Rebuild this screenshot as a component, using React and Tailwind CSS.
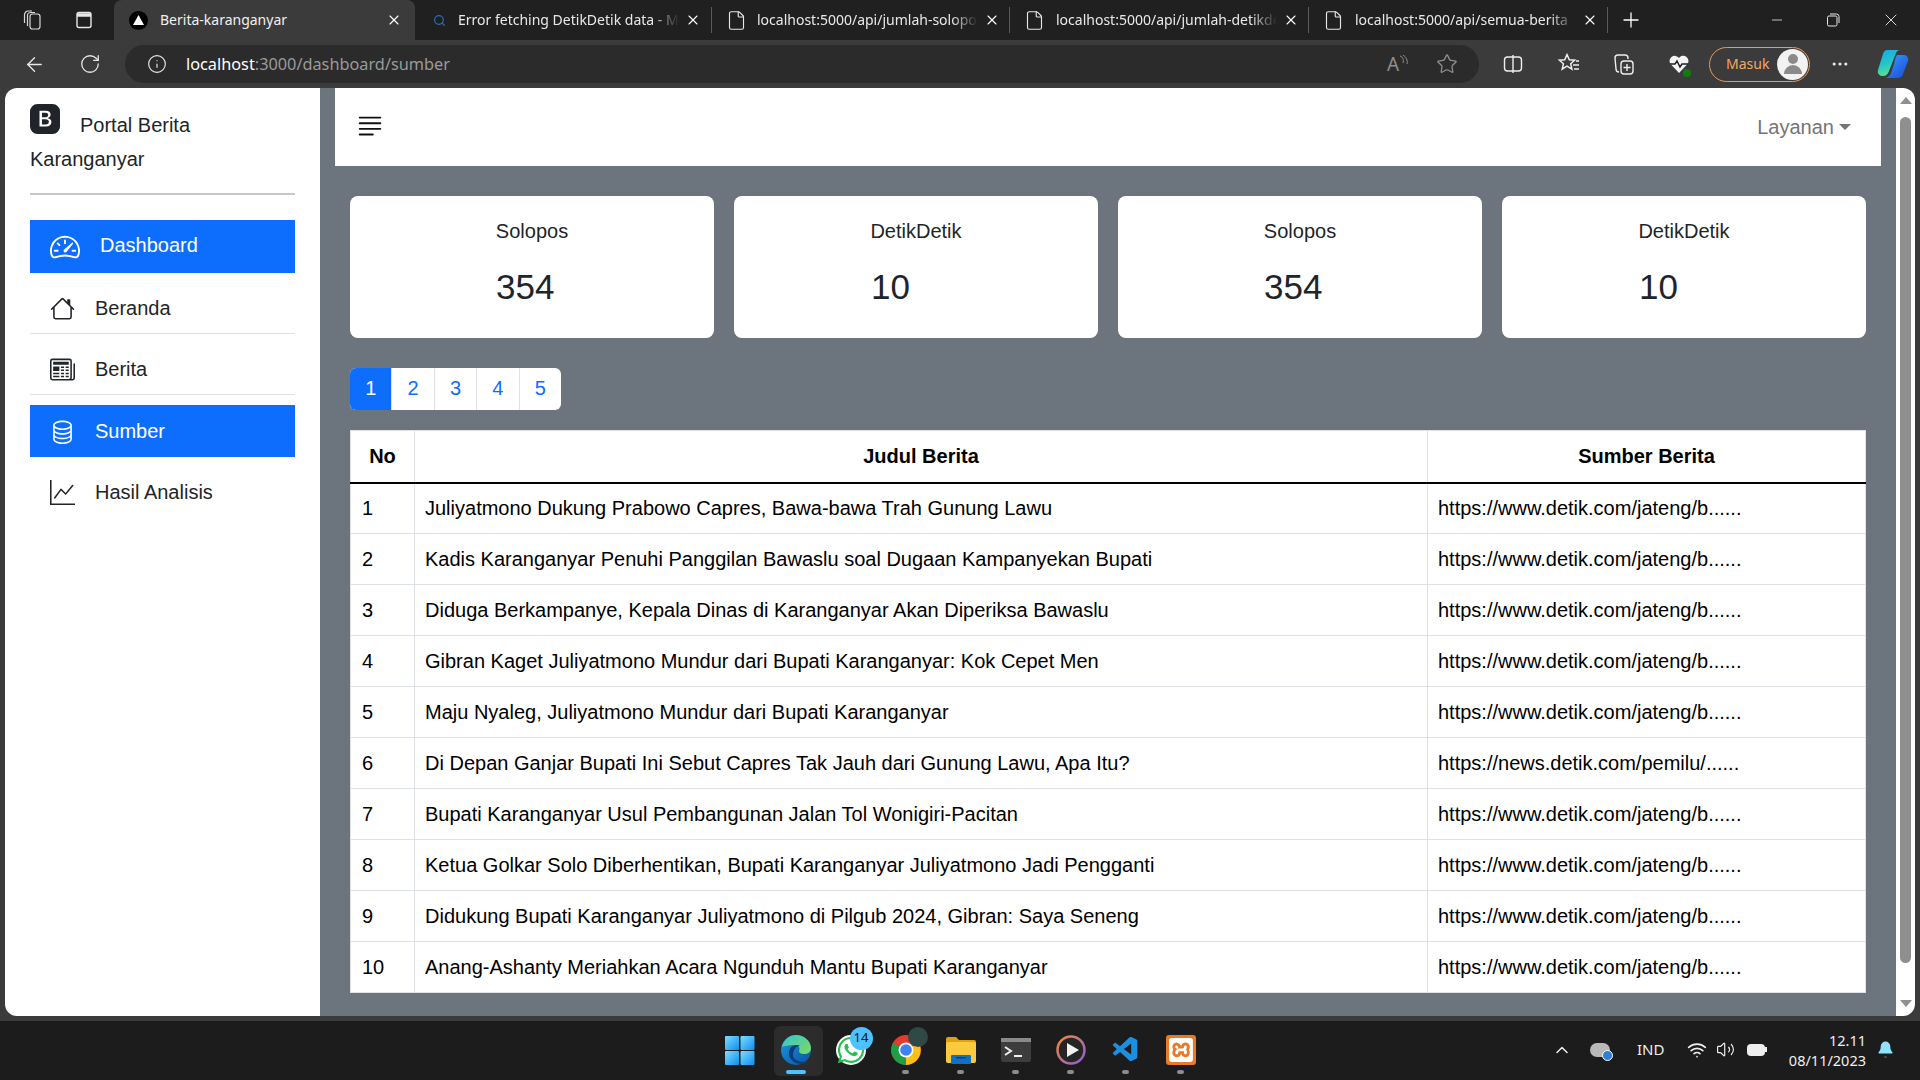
import React from "react";
import { BsSpeedometer2, BsHouse, BsNewspaper, BsDatabase, BsGraphUp, BsJustifyLeft, BsBootstrapFill } from "react-icons/bs";
import { VscVscode } from "react-icons/vsc";
import { SiXampp } from "react-icons/si";
import { FaWhatsapp } from "react-icons/fa";
import { ArrowLeft, RotateCw, Info, Star, ChevronUp, Volume2, Wifi, Bell, Plus, X, Minus, File, Search, MoreHorizontal } from "lucide-react";

const rows = [
  ["Juliyatmono Dukung Prabowo Capres, Bawa-bawa Trah Gunung Lawu", "https://www.detik.com/jateng/b......"],
  ["Kadis Karanganyar Penuhi Panggilan Bawaslu soal Dugaan Kampanyekan Bupati", "https://www.detik.com/jateng/b......"],
  ["Diduga Berkampanye, Kepala Dinas di Karanganyar Akan Diperiksa Bawaslu", "https://www.detik.com/jateng/b......"],
  ["Gibran Kaget Juliyatmono Mundur dari Bupati Karanganyar: Kok Cepet Men", "https://www.detik.com/jateng/b......"],
  ["Maju Nyaleg, Juliyatmono Mundur dari Bupati Karanganyar", "https://www.detik.com/jateng/b......"],
  ["Di Depan Ganjar Bupati Ini Sebut Capres Tak Jauh dari Gunung Lawu, Apa Itu?", "https://news.detik.com/pemilu/......"],
  ["Bupati Karanganyar Usul Pembangunan Jalan Tol Wonigiri-Pacitan", "https://www.detik.com/jateng/b......"],
  ["Ketua Golkar Solo Diberhentikan, Bupati Karanganyar Juliyatmono Jadi Pengganti", "https://www.detik.com/jateng/b......"],
  ["Didukung Bupati Karanganyar Juliyatmono di Pilgub 2024, Gibran: Saya Seneng", "https://www.detik.com/jateng/b......"],
  ["Anang-Ashanty Meriahkan Acara Ngunduh Mantu Bupati Karanganyar", "https://www.detik.com/jateng/b......"],
];

const cards = [
  ["Solopos", "354", "pl-[146px]"],
  ["DetikDetik", "10", "pl-[137px]"],
  ["Solopos", "354", "pl-[146px]"],
  ["DetikDetik", "10", "pl-[137px]"],
];

function Tab({ icon, title, w, pad }) {
  return (
    <div className={`flex items-center h-10 shrink-0 ${w}`}>
      <div className={`flex justify-center shrink-0 ${pad}`}>{icon}</div>
      <div className="w-[221px] text-[14px] text-[#e8e8e8] whitespace-nowrap overflow-hidden pb-[1px] [mask-image:linear-gradient(to_right,black_88%,transparent)]">{title}</div>
      <X size={16} strokeWidth={1.7} className="text-white ml-[6px] shrink-0" />
      <div className="ml-auto h-[26px] w-px bg-[#5a5a5a]" />
    </div>
  );
}

function TabBar() {
  return (
    <div className="h-10 bg-[#202020] flex items-end text-white shrink-0 font-['Noto_Sans',sans-serif]">
      <div className="w-[114px] h-10 flex items-center gap-[31px] pl-[21px] shrink-0">
        <svg width="22" height="22" viewBox="0 0 22 22" fill="none" stroke="#d8d8d8" strokeWidth="1.200"><rect x="9" y="5" width="10" height="15" rx="2.500" /><path d="M6.500 17V6.500C6.500 4.500 8 3.500 10 3.500h4" /><path d="M3.500 14V6C3.500 4 5 2 7 2h4" /></svg>
        <svg width="20" height="20" viewBox="0 0 20 20" fill="none" stroke="#e8e8e8" strokeWidth="1.4"><rect x="3" y="2.500" width="14" height="15" rx="2" /><path d="M3 5h14" strokeWidth="3.500" /></svg>
      </div>
      <div className="w-[301px] h-[40px] bg-[#3b3b3b] rounded-t-lg flex items-center shrink-0">
        <div className="w-[46px] flex justify-center pl-[2px] shrink-0">
          <div className="w-[19px] h-[19px] rounded-full bg-black flex items-center justify-center">
            <svg width="11" height="10" viewBox="0 0 11 10"><path d="M5.500 0L11 10H0z" fill="#fff" /></svg>
          </div>
        </div>
        <div className="w-[226px] text-[14px] text-[#f0f0f0] whitespace-nowrap pb-[1px]">Berita-karanganyar</div>
        <X size={16} strokeWidth={1.7} className="text-white shrink-0" />
      </div>
      <Tab w="w-[297px]" pad="w-[43px] pl-[6px]" title="Error fetching DetikDetik data - Microsoft" icon={<Search size={13} strokeWidth={2.200} className="text-[#2a6fb8]" />} />
      <Tab w="w-[298px]" pad="w-[45px] pl-[3px]" title="localhost:5000/api/jumlah-solopos" icon={<File size={21} strokeWidth={1.3} className="text-[#e8e8e8]" />} />
      <Tab w="w-[299px]" pad="w-[46px] pl-[3px]" title="localhost:5000/api/jumlah-detikdetik" icon={<File size={21} strokeWidth={1.3} className="text-[#e8e8e8]" />} />
      <Tab w="w-[299px]" pad="w-[46px] pl-[3px]" title="localhost:5000/api/semua-berita" icon={<File size={21} strokeWidth={1.3} className="text-[#e8e8e8]" />} />
      <div className="w-[46px] h-10 flex items-center justify-center shrink-0"><Plus size={24} strokeWidth={1.3} /></div>
      <div className="flex-1 h-10 flex items-center justify-end text-[#e8e8e8]">
        <Minus size={16} strokeWidth={1.2} className="mr-[41px]" />
        <svg width="14" height="14" viewBox="0 0 14 14" fill="none" stroke="#e8e8e8" strokeWidth="1" className="mr-[41px]"><rect x="1.500" y="3" width="9.500" height="10" rx="1.500" /><path d="M4 1h6.500A2.500 2.500 0 0 1 13 3.500V10" /></svg>
        <X size={20} strokeWidth={1.1} className="mr-[19px]" />
      </div>
    </div>
  );
}

function Toolbar() {
  return (
    <div className="h-12 bg-[#3b3b3b] flex items-center shrink-0 text-[#e8e8e8] font-['Noto_Sans',sans-serif]">
      <div className="w-[125px] flex items-center gap-[33px] pl-[23px] shrink-0">
        <ArrowLeft size={23} strokeWidth={1.4} />
        <RotateCw size={22} strokeWidth={1.4} />
      </div>
      <div className="w-[1354px] h-[38px] rounded-full bg-[#2b2b2b] flex items-center pl-[22px] shrink-0">
        <Info size={20} strokeWidth={1.4} />
        <div className="ml-[19px] text-[16.3px] whitespace-nowrap text-white">localhost<span className="text-[#9a9a9a]">:3000/dashboard/sumber</span></div>
        <div className="ml-auto flex items-center gap-[25px] pr-[21px] text-[#8f8f8f]">
          <div className="flex items-start w-[24px] text-[19px] leading-none">
            A
            <svg width="10" height="12" viewBox="0 0 10 12" fill="none" stroke="#8f8f8f" strokeWidth="1"><path d="M1 1c3 1 4 4 3 7" /><path d="M4 0c3 2 5 5 4 9" /></svg>
          </div>
          <Star size={22} strokeWidth={1.4} />
        </div>
      </div>
      <div className="flex items-center flex-1">
        <svg width="22" height="22" viewBox="0 0 22 22" fill="none" stroke="#eee" strokeWidth="1.400" className="ml-[23px]"><rect x="2.500" y="4" width="17" height="14" rx="3" /><path d="M11 2v18" /></svg>
        <svg width="24" height="24" viewBox="0 0 24 24" fill="none" stroke="#eee" strokeWidth="1.500" className="ml-[33px]"><path d="M10 2.500l2.300 5.200 5.400.5-4 3.600 1.200 5.300-4.900-2.900-4.800 2.900 1.200-5.300-4-3.600 5.300-.5z" /><path d="M16 13h6M17 17h5M19 9h3" /></svg>
        <svg width="24" height="26" viewBox="0 0 24 26" fill="none" stroke="#eee" strokeWidth="1.400" className="ml-[31px]"><path d="M7 21a3 3 0 0 1-3-3L3 7a3 3 0 0 1 3-3h7a3 3 0 0 1 3 3v1" /><rect x="9" y="10" width="12" height="13" rx="3" /><path d="M15 13v7M11.500 16.500h7" /></svg>
        <div className="ml-[32px] relative w-[22px] h-[22px]">
          <svg width="22" height="22" viewBox="0 0 22 22"><path d="M11 20L2.500 11A5.200 5.200 0 0 1 11 5a5.200 5.200 0 0 1 8.500 6z" fill="#f4f4f4" /><path d="M2 11h5l2-3 3 6 2-3h6" stroke="#222" strokeWidth="1.500" fill="none" /></svg>
          <div className="absolute right-[-1px] bottom-[-2px] w-[8px] h-[8px] rounded-full bg-[#107c10]" />
        </div>
        <div className="ml-[19px] w-[101px] h-[35px] rounded-full border border-[#e59a5c] flex items-center justify-between pl-[16px] pr-[1px] text-[14px] text-[#f0a868]">
          <span className="pb-[1px]">Masuk</span>
          <div className="w-[31px] h-[31px] rounded-full bg-[#f2f2f2] flex flex-col items-center justify-center gap-[1px]">
            <div className="w-[10px] h-[10px] rounded-full bg-[#8a8a8a]" />
            <div className="w-[18px] h-[9px] rounded-t-full rounded-b bg-[#8a8a8a]" />
          </div>
        </div>
        <MoreHorizontal size={20} strokeWidth={1.8} className="ml-[20px]" />
        <svg width="32" height="30" viewBox="0 0 32 30" className="ml-[27px]">
          <defs>
            <linearGradient id="cp1" x1="0" y1="0" x2="0.300" y2="1"><stop offset="0" stopColor="#1aa7e8" /><stop offset="0.600" stopColor="#22c8c8" /><stop offset="1" stopColor="#5fe08a" /></linearGradient>
            <linearGradient id="cp2" x1="0" y1="0" x2="1" y2="1"><stop offset="0" stopColor="#38a4ff" /><stop offset="1" stopColor="#1a46d8" /></linearGradient>
          </defs>
          <path d="M10 1h13c-2 0-3 1-4 3L12 22c-1 3-3 5-6 5-3 0-6-2-5-6L6 5c.600-2 2-4 4-4z" fill="url(#cp1)" />
          <path d="M20 6h7c3 0 5 3 4 6l-5 13c-1 3-3 4-6 4H7c3 0 6-2 7-5l3-9c1-3 1-6 3-9z" fill="url(#cp2)" />
        </svg>
      </div>
    </div>
  );
}

function Sidebar() {
  const item = "flex items-center h-[51px] border-b border-[#dee2e6] text-[#212529] pl-[20px] gap-[20px] mt-[10px]";
  return (
    <aside className="w-[315px] shrink-0 bg-white rounded-tl-xl rounded-bl-xl px-[25px] text-[20px] text-[#212529]">
      <div className="pt-[16px] leading-[34px] h-[107px] border-b-2 border-[#c8c8c8]">
        <BsBootstrapFill size={30} className="inline-block text-[#212529] mr-[20px] align-[-2px]" />
        Portal Berita
        <br />
        Karanganyar
      </div>
      <div className="mt-[25px] h-[53px] bg-[#0d6efd] text-white flex items-center pl-[20px] gap-[20px]">
        <BsSpeedometer2 size={30} /> <span className="pb-[3px]">Dashboard</span>
      </div>
      <div className={item}><BsHouse size={25} /> Beranda</div>
      <div className={item}><BsNewspaper size={25} /> Berita</div>
      <div className="mt-[10px] h-[52px] bg-[#0d6efd] text-white flex items-center pl-[20px] gap-[20px]"><BsDatabase size={25} /> Sumber</div>
      <div className="flex items-center h-[51px] pl-[20px] gap-[20px] mt-[10px]"><BsGraphUp size={25} /> <span className="pb-[1px]">Hasil Analisis</span></div>
    </aside>
  );
}

function Main() {
  return (
    <main className="flex-1 bg-[#6c757d] px-[15px] text-[20px] text-[#212529]">
      <div className="h-[78px] bg-white flex items-center justify-between pl-[20px] pr-[30px]">
        <BsJustifyLeft size={30} className="text-[#111] mb-[2px]" />
        <div className="flex items-center text-[#757575] mb-[1px]">
          <span className="mr-[-1px]">Layanan</span>
          <span className="ml-[6px] w-0 h-0 border-x-[6px] border-x-transparent border-t-[6px] border-t-[#757575]" />
        </div>
      </div>
      <div className="px-[15px] pt-[30px]">
        <div className="grid grid-cols-4 gap-[20px]">
          {cards.map(([t, n, pl], i) => (
            <div key={i} className="h-[142px] bg-white rounded-lg pt-[20px]">
              <div className="text-center leading-[30px]">{t}</div>
              <div className={`text-[35px] leading-[42px] mt-[20px] ${pl}`}>{n}</div>
            </div>
          ))}
        </div>
        <div className="mt-[30px] flex w-[211px] h-[42px] rounded-md bg-white overflow-hidden text-[#0d6efd] pb-0">
          {["1", "2", "3", "4", "5"].map((p, i) => (
            <div key={p} className={i === 0 ? "flex-1 flex items-center justify-center bg-[#0d6efd] text-white pb-[2px]" : "flex-1 flex items-center justify-center border-l border-[#dee2e6] pb-[2px]"}>{p}</div>
          ))}
        </div>
        <table className="mt-[20px] w-full table-fixed bg-white text-black border-collapse">
          <colgroup>
            <col className="w-[64px]" />
            <col className="w-[1013px]" />
            <col />
          </colgroup>
          <thead>
            <tr className="h-[52px] border-b-[2px] border-black border-t border-t-[#dee2e6]">
              <th className="font-bold text-center border-x border-[#dee2e6]">No</th>
              <th className="font-bold text-center border-x border-[#dee2e6]">Judul Berita</th>
              <th className="font-bold text-center border-x border-[#dee2e6]">Sumber Berita</th>
            </tr>
          </thead>
          <tbody>
            {rows.map(([t, s], i) => (
              <tr key={i} className="h-[51px] border-b border-[#dee2e6]">
                <td className="pl-[11px] pr-[11px] border-x border-[#dee2e6]">{i + 1}</td>
                <td className="pl-[10px] pr-[11px] border-x border-[#dee2e6] whitespace-nowrap">{t}</td>
                <td className="pl-[10px] pr-[11px] border-x border-[#dee2e6]">{s}</td>
              </tr>
            ))}
          </tbody>
        </table>
      </div>
    </main>
  );
}

function Scrollbar() {
  return (
    <div className="w-[19px] shrink-0 bg-white rounded-tr-xl rounded-br-xl flex flex-col items-center pt-[9px] pb-[9px]">
      <div className="w-0 h-0 border-x-[6px] border-x-transparent border-b-[7px] border-b-[#8f8f8f]" />
      <div className="w-[11px] h-[846px] mt-[13px] rounded-full bg-[#8f8f8f]" />
      <div className="mt-auto w-0 h-0 border-x-[6px] border-x-transparent border-t-[7px] border-t-[#8f8f8f]" />
    </div>
  );
}

function Dock({ active, children, className = "" }) {
  return (
    <div className={`w-[55px] h-full flex flex-col items-center justify-center relative shrink-0 pb-[2px] ${className}`}>
      {active && <div className="absolute left-[6px] top-[5px] w-[49px] h-[50px] rounded-md bg-[#2c2c2c]" />}
      <div className="relative w-[32px] h-[32px] flex items-center justify-center">{children}</div>
      {active ? (
        <div className="absolute bottom-[6px] w-[20px] h-[4px] rounded-full bg-[#4cc2ff]" />
      ) : active === false ? (
        <div className="absolute bottom-[6px] w-[7px] h-[4px] rounded-full bg-[#8c8c8c]" />
      ) : null}
    </div>
  );
}

function Taskbar() {
  return (
    <div className="h-[59px] bg-[#1c1c1c] flex items-center shrink-0 text-white font-['Noto_Sans',sans-serif]">
      <div className="w-[711px] shrink-0" />
      <Dock className="w-[57px]">
        <svg width="30" height="30" viewBox="0 0 30 30">
          <defs><linearGradient id="w" x1="0" y1="0" x2="1" y2="1"><stop offset="0" stopColor="#7fdcff" /><stop offset="1" stopColor="#0d8ef0" /></linearGradient></defs>
          <rect x="0" y="1" width="14" height="14" rx="1" fill="url(#w)" /><rect x="15.500" y="1" width="14" height="14" rx="1" fill="url(#w)" />
          <rect x="0" y="16" width="14" height="14" rx="1" fill="url(#w)" /><rect x="15.500" y="16" width="14" height="14" rx="1" fill="url(#w)" />
        </svg>
      </Dock>
      <Dock active>
        <svg width="32" height="32" viewBox="0 0 32 32">
          <defs>
            <linearGradient id="e1" x1="0" y1="0" x2="1" y2="1"><stop offset="0" stopColor="#37c6d0" /><stop offset="1" stopColor="#7ddb5f" /></linearGradient>
            <linearGradient id="e2" x1="0" y1="0" x2="1" y2="1"><stop offset="0" stopColor="#1b9de2" /><stop offset="1" stopColor="#0c4f9e" /></linearGradient>
          </defs>
          <circle cx="16" cy="16" r="15" fill="url(#e2)" />
          <path d="M2 13C4 5 10 1 16 1c8 0 15 6 15 13 0 4-3 6-7 6-3 0-5-1-5-3 1-2 1-6-5-6-6 0-10 1-12 2z" fill="url(#e1)" />
          <path d="M13 21c0-5 3-9 7-9-3-2-10-1-11 6-1 6 5 12 12 12 3 0 6-1 7-3-6 2-15 0-15-6z" fill="#0a3d7c" />
        </svg>
      </Dock>
      <Dock>
        <div className="w-[30px] h-[30px] flex items-center justify-center rounded-full bg-white"><FaWhatsapp size={30} className="text-[#25c04f]" /></div>
        <div className="absolute -right-[6px] -top-[7px] w-[23px] h-[23px] rounded-full bg-[#4cc2ff] text-[#111] text-[13px] flex items-center justify-center">14</div>
      </Dock>
      <Dock active={false}>
        <svg width="30" height="30" viewBox="0 0 30 30">
          <circle cx="15" cy="15" r="15" fill="#e33b2e" />
          <path d="M15 15L28 8a15 15 0 0 1-13 22z" fill="#fbc116" />
          <path d="M15 15L15 30A15 15 0 0 1 2 8z" fill="#1f9e48" />
          <circle cx="15" cy="15" r="7.500" fill="#fff" /><circle cx="15" cy="15" r="5.800" fill="#3d82f0" />
        </svg>
        <div className="absolute right-[-6px] top-[-7px] w-[20px] h-[20px] rounded-full bg-[#2f4a44]" />
      </Dock>
      <Dock active={false}>
        <svg width="30" height="28" viewBox="0 0 30 28">
          <path d="M0 3a2 2 0 0 1 2-2h8l3 3h15a2 2 0 0 1 2 2v4H0z" fill="#e0a010" />
          <rect y="6" width="30" height="21" rx="2" fill="#fcc93f" />
          <rect x="5" y="19" width="20" height="9" rx="1" fill="#1270c4" /><rect x="10" y="21" width="10" height="1.500" fill="#0a3e78" />
        </svg>
      </Dock>
      <Dock active={false}>
        <svg width="30" height="24" viewBox="0 0 30 24">
          <rect width="30" height="24" rx="2" fill="#3d3d3d" /><rect width="30" height="4" fill="#8a8a8a" />
          <path d="M4 9l6 4-6 4" stroke="#eee" strokeWidth="2" fill="none" /><path d="M13 18h8" stroke="#eee" strokeWidth="2" />
        </svg>
      </Dock>
      <Dock active={false}>
        <svg width="30" height="30" viewBox="0 0 30 30">
          <defs><linearGradient id="p" x1="0" y1="0" x2="1" y2="1"><stop offset="0" stopColor="#f0893a" /><stop offset="1" stopColor="#8e5cd8" /></linearGradient></defs>
          <circle cx="15" cy="15" r="13.500" fill="#252525" stroke="url(#p)" strokeWidth="2.500" />
          <path d="M11 8l12 7-12 7z" fill="#f2f2f2" />
        </svg>
      </Dock>
      <Dock active={false}><VscVscode size={30} className="text-[#1c8fe0]" /></Dock>
      <Dock active={false}>
        <div className="w-[30px] h-[30px] rounded-[3px] bg-[#ea7a25] flex items-center justify-center"><SiXampp size={24} className="text-white" /></div>
      </Dock>
      <div className="flex-1 flex items-center justify-end h-full pb-[2px]">
        <ChevronUp size={20} strokeWidth={1.800} className="text-[#eee]" />
        <div className="relative ml-[18px] w-[20px] h-[14px] rounded-full bg-[#b8b8b8]">
          <div className="absolute right-[-3px] bottom-[-4px] w-[11px] h-[11px] rounded-full bg-[#2f7fd4] border border-white" />
        </div>
        <div className="ml-[27px] w-[30px] text-[15px] text-[#eee] whitespace-nowrap">IND</div>
        <Wifi size={20} strokeWidth={2} className="ml-[20px] text-[#eee]" />
        <Volume2 size={19} strokeWidth={1.500} className="ml-[9px] text-[#eee]" />
        <div className="ml-[12px] flex items-center">
          <div className="w-[18px] h-[12px] rounded-sm bg-[#eee]" /><div className="w-[2px] h-[5px] bg-[#eee]" />
        </div>
        <div className="ml-[13px] text-right text-[14.5px] leading-[20px] text-[#f0f0f0] w-[86px] whitespace-nowrap">
          <div>12.11</div><div>08/11/2023</div>
        </div>
        <Bell size={19} fill="#8fe4fb" strokeWidth={0} className="ml-[10px] mr-[25px]" />
      </div>
    </div>
  );
}

export default function App() {
  return (
    <div className="w-[1920px] h-[1080px] overflow-hidden flex flex-col bg-[#3b3b3b] font-['Liberation_Sans',Arial,sans-serif]">
      <TabBar />
      <Toolbar />
      <div className="flex h-[928px] pl-[5px] pr-[5px] shrink-0">
        <Sidebar />
        <Main />
        <Scrollbar />
      </div>
      <div className="h-[5px] shrink-0 bg-[#3b3b3b]" />
      <Taskbar />
    </div>
  );
}
